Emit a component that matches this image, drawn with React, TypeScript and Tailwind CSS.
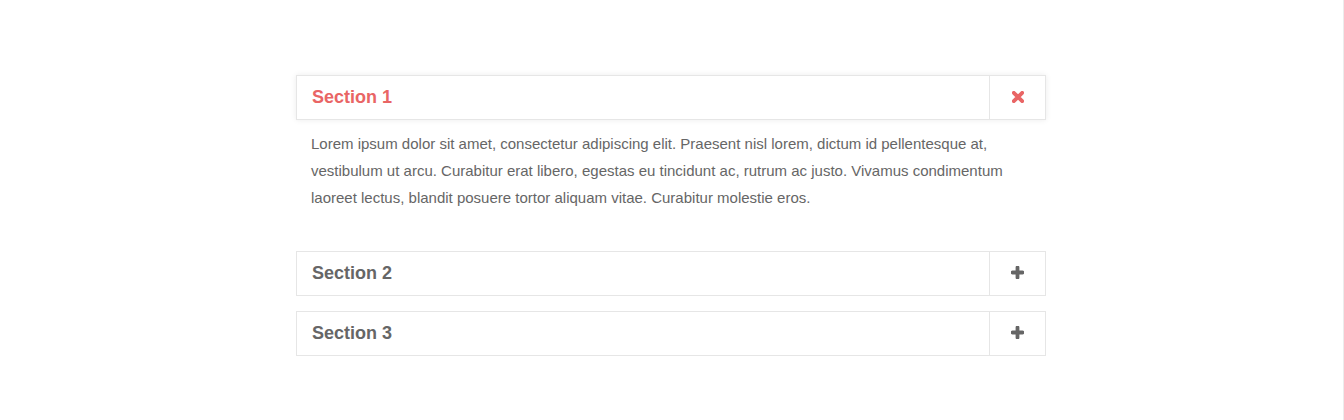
import { useState } from "react";

const sections = [
  {
    id: 1,
    title: "Section 1",
    body: "Lorem ipsum dolor sit amet, consectetur adipiscing elit. Praesent nisl lorem, dictum id pellentesque at, vestibulum ut arcu. Curabitur erat libero, egestas eu tincidunt ac, rutrum ac justo. Vivamus condimentum laoreet lectus, blandit posuere tortor aliquam vitae. Curabitur molestie eros.",
  },
  { id: 2, title: "Section 2", body: "Lorem ipsum dolor sit amet, consectetur adipiscing elit." },
  { id: 3, title: "Section 3", body: "Lorem ipsum dolor sit amet, consectetur adipiscing elit." },
];

function CloseIcon() {
  return (
    <svg width="12" height="12" viewBox="0 0 12 12" className="text-[#e96565]">
      <path d="M1.8 1.8 L10.2 10.2 M10.2 1.8 L1.8 10.2" stroke="currentColor" strokeWidth="3.8" strokeLinecap="round" />
    </svg>
  );
}

function PlusIcon() {
  return (
    <svg width="13" height="13" viewBox="0 0 13 13" className="text-[#666]">
      <path d="M6.5 1.5 V11.5 M1.5 6.5 H11.5" stroke="currentColor" strokeWidth="3.8" strokeLinecap="round" />
    </svg>
  );
}

export default function App() {
  const [open, setOpen] = useState<number | null>(1);

  return (
    <div className="min-h-[420px] w-full bg-white border-r border-[#ececec] pr-px font-['Liberation_Sans',Arial,sans-serif]">
      <div className="mx-auto w-[750px] pt-[75px] flex flex-col gap-[15px]">
        {sections.map((s) => {
          const isOpen = open === s.id;
          return (
            <div key={s.id}>
              <button
                onClick={() => setOpen(isOpen ? null : s.id)}
                className={`w-full h-[45px] flex items-stretch bg-white border border-[#e6e6e6] text-left cursor-pointer ${isOpen ? "shadow-[0_0_6px_rgba(0,0,0,0.08)]" : ""}`}
              >
                <span className={`flex-1 flex items-center pl-[15px] text-[18px] font-bold ${isOpen ? "text-[#e96565]" : "text-[#666]"}`}>
                  {s.title}
                </span>
                <span className="w-[56px] border-l border-[#e6e6e6] flex items-center justify-center pb-[2px]">
                  {isOpen ? <CloseIcon /> : <PlusIcon />}
                </span>
              </button>
              {isOpen && (
                <p className="px-[15px] pt-[10px] pb-[25px] text-[15px] leading-[27px] text-[#666]">
                  {s.body}
                </p>
              )}
            </div>
          );
        })}
      </div>
    </div>
  );
}
